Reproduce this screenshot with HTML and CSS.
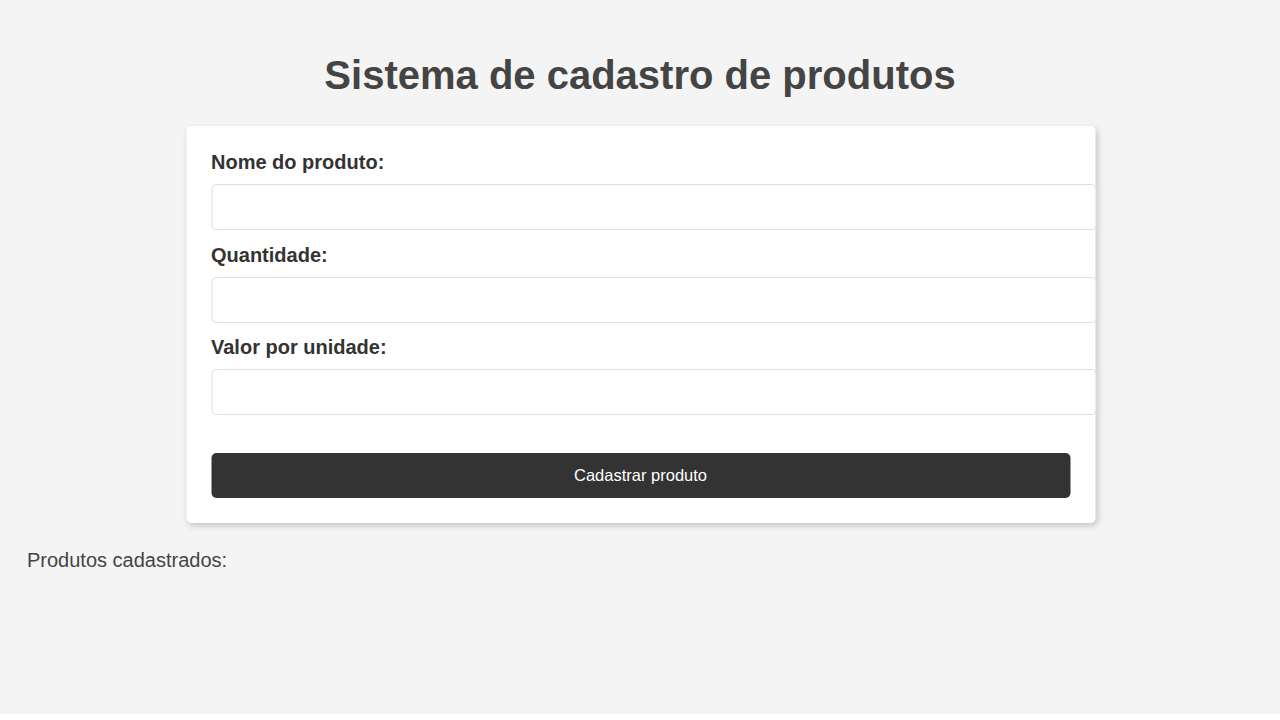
FILE: index.html
```html
<!DOCTYPE html>
<html lang="pt-BR">
<head>
<meta charset="utf-8">
<title>Sistema de cadastro de produtos</title>
<link rel="stylesheet" href="styles.css">
</head>
<body>
<div class="page">
  <h1 class="title">Sistema de cadastro de produtos</h1>
  <form class="card">
    <label class="label" for="nome">Nome do produto:</label>
    <input class="field" id="nome" type="text">
    <label class="label" for="qtd">Quantidade:</label>
    <input class="field" id="qtd" type="text">
    <label class="label" for="valor">Valor por unidade:</label>
    <input class="field" id="valor" type="text">
    <button class="submit" type="button">Cadastrar produto</button>
  </form>
  <p class="list-title">Produtos cadastrados:</p>
</div>
</body>
</html>
```

FILE: styles.css
```css
html {
  background: #ffffff;
}
body {
  margin: 0;
  font-family: "Liberation Sans", Arial, sans-serif;
}
.page {
  background: #f4f4f4;
  min-height: 714px;
  box-sizing: border-box;
  padding: 52px 27px 20px;
}
.title {
  margin: 0;
  text-align: center;
  font-size: 40px;
  line-height: 46px;
  font-weight: bold;
  color: #444444;
}
.card {
  width: 859px;
  margin: 28px auto 0;
  padding: 25px;
  background: #ffffff;
  border-radius: 5px;
  box-shadow: 2px 3px 6px rgba(0, 0, 0, 0.18);
  transform: translateX(0.5px);
}
.label {
  display: block;
  font-size: 20px;
  line-height: 22px;
  font-weight: bold;
  color: #333333;
  margin: 0 0 11px;
}
.field {
  display: block;
  width: 100%;
  height: 20px;
  padding: 12px;
  margin: 0 0 13.5px;
  border: 1px solid #dddddd;
  border-radius: 5px;
  background: #ffffff;
  font-size: 16px;
  font-family: "Liberation Sans", Arial, sans-serif;
}
.field:last-of-type {
  margin-bottom: 38px;
}
.submit {
  display: block;
  width: 100%;
  height: 45px;
  margin: 0;
  border: none;
  border-radius: 5px;
  background: #333333;
  color: #ffffff;
  font-size: 16.5px;
  font-family: "Liberation Sans", Arial, sans-serif;
}
.list-title {
  margin: 26px 0 0;
  font-size: 20px;
  line-height: 22px;
  color: #444444;
}
```
